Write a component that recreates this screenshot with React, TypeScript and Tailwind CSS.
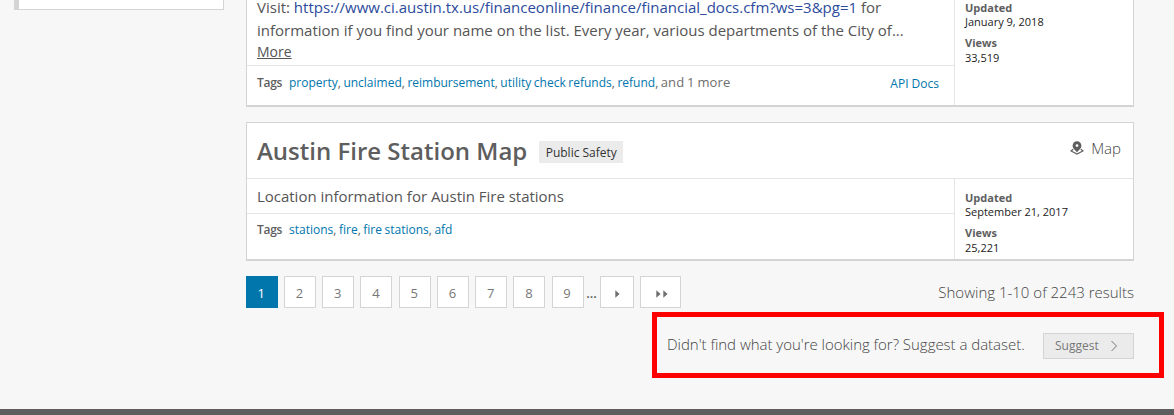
import React from "react";

const pages = ["2", "3", "4", "5", "6", "7", "8", "9"];

function Tags({ items, more }: { items: string[]; more?: string }) {
  return (
    <div className="flex whitespace-nowrap text-[12px] leading-[18px] text-[#5e5e5e]">
      <span className="w-[32px] shrink-0 font-semibold tracking-[-0.3px]">Tags</span>
      <span className="[word-spacing:-0.6px]">
        {items.map((tag, i) => (
          <React.Fragment key={tag}>
            <a className="text-[#0076ad]">{tag}</a>
            {i < items.length - 1 || more ? ", " : ""}
          </React.Fragment>
        ))}
        {more && <span className="text-[13px] leading-none tracking-[0.1px] text-[#6e6e6e]">{more}</span>}
      </span>
    </div>
  );
}

function Meta({ updated, views }: { updated: string; views: string }) {
  return (
    <dl className="text-[11px] leading-[14px] text-[#222]">
      <dt className="font-bold text-[#5e5e5e]">Updated</dt>
      <dd className="leading-[13px]">{updated}</dd>
      <dt className="mt-[8px] font-bold text-[#5e5e5e]">Views</dt>
      <dd className="leading-[16px]">{views}</dd>
    </dl>
  );
}

function MapIcon() {
  return (
    <svg width="14" height="14" viewBox="0 0 14 14" className="-mt-px">
      <path
        fill="#5e5e5e"
        fillRule="evenodd"
        d="M7 .3a4.400 4.400 0 0 0-4.400 4.400C2.600 7.500 5.400 8.900 7 11.400 8.600 8.900 11.400 7.500 11.400 4.700A4.400 4.400 0 0 0 7 .3Zm0 2.900a1.400 1.400 0 1 1 0 2.800 1.400 1.400 0 0 1 0-2.800Z"
      />
      <path fill="none" stroke="#5e5e5e" strokeWidth="1.200" d="M3.200 8.300 1.100 10 7 13 12.900 10 10.800 8.300" />
    </svg>
  );
}

function Arrow() {
  return (
    <svg width="5" height="8" viewBox="0 0 5 8" className="mt-[4px]">
      <path fill="#6e6e6e" d="M.3.300 4.600 4 .3 7.700Z" />
    </svg>
  );
}

export default function App() {
  return (
    <div className="flex h-[415px] w-[1174px] flex-col overflow-hidden bg-[#f7f7f7] font-['Open_Sans',sans-serif] text-[#5e5e5e]">
      <div className="flex h-[409px] shrink-0 items-start">
        <aside className="ml-[14px] h-[10px] w-[210px] shrink-0 border-r border-b border-l-[5px] border-[#d4d4d4] bg-white" />
        <main className="ml-[22px] w-[918px] shrink-0">
          <article className="flex h-[107px] w-[888px] border-x border-b-2 border-[#d4d4d4] bg-white">
            <div className="flex w-[708px] shrink-0 flex-col border-r border-[#e5e5e5]">
              <div className="h-[66px] shrink-0 border-b border-[#e5e5e5] pl-[10px] text-[15px] whitespace-nowrap">
                <p className="-mt-[4px] leading-[23px] text-[#555]">
                  Visit:{" "}
                  <a className="text-[#2c4b9c]">
                    https://www.ci.austin.tx.us/financeonline/finance/financial_docs.cfm?ws=3&amp;pg=1
                  </a>{" "}
                  for
                  <br />
                  information if you find your name on the list. Every year, various departments of the City of...
                </p>
                <a className="mt-px block text-[14px] leading-[18px] text-[#555] underline">More</a>
              </div>
              <div className="flex justify-between pt-[8px] pr-[15px] pl-[10px]">
                <Tags
                  items={["property", "unclaimed", "reimbursement", "utility check refunds", "refund"]}
                  more="and 1 more"
                />
                <a className="mt-[1px] text-[12px] leading-[18px] text-[#0076ad]">API Docs</a>
              </div>
            </div>
            <div className="pt-px pl-[10px]">
              <Meta updated="January 9, 2018" views="33,519" />
            </div>
          </article>

          <article className="mt-[15px] h-[139px] w-[888px] border border-b-2 border-[#d4d4d4] bg-white">
            <header className="flex h-[56px] items-center border-b border-[#e5e5e5] pr-[12px] pl-[10px]">
              <h2 className="text-[24px] leading-[32px] font-semibold whitespace-nowrap">Austin Fire Station Map</h2>
              <span className="mt-[3px] ml-[12px] flex h-[22px] w-[84px] items-center justify-center bg-[#ebebeb] pt-[2px] text-[12px] whitespace-nowrap text-[#333]">
                Public Safety
              </span>
              <span className="-mt-[4px] ml-auto flex items-center gap-[7px] text-[15px] font-light text-[#444]">
                <MapIcon />
                Map
              </span>
            </header>
            <div className="flex h-[80px]">
              <div className="w-[708px] shrink-0 border-r border-[#e5e5e5]">
                <p className="h-[35px] border-b border-[#e5e5e5] pl-[10px] text-[15px] leading-[35px] tracking-[-0.02px] text-[#555]">
                  Location information for Austin Fire stations
                </p>
                <div className="pt-[7px] pl-[10px]">
                  <Tags items={["stations", "fire", "fire stations", "afd"]} />
                </div>
              </div>
              <div className="pt-[12px] pl-[10px]">
                <Meta updated="September 21, 2017" views="25,221" />
              </div>
            </div>
          </article>

          <div className="mt-[15px] flex h-[32px] w-[888px] items-center">
            <nav className="-ml-[0.2px] flex items-center gap-[6.22px] text-[13px] text-[#777]">
              <span className="flex h-[32px] w-[32px] items-center justify-center bg-[#0076ad] pt-[3px] pr-[1px] text-white">
                1
              </span>
              {pages.map((n) => (
                <a
                  key={n}
                  className="flex h-[32px] w-[32px] items-center justify-center border border-[#d4d4d4] bg-white pt-[3px] pr-[1px]"
                >
                  {n}
                </a>
              ))}
            </nav>
            <span className="w-[16px] pt-[3px] text-center text-[13px] font-semibold">...</span>
            <a className="flex h-[32px] w-[34px] items-center justify-center border border-[#d4d4d4] bg-white pl-[2px]">
              <Arrow />
            </a>
            <a className="ml-[6px] flex h-[32px] w-[41px] items-center justify-center gap-[2px] border border-[#d4d4d4] bg-white pl-[3px]">
              <Arrow />
              <Arrow />
            </a>
            <span className="ml-auto text-[15px] font-light whitespace-nowrap text-[#444]">
              Showing 1-10 of 2243 results
            </span>
          </div>

          <section className="mt-[4px] ml-auto flex h-[66px] w-[512px] items-center border-5 border-[#f00] pl-[10px] whitespace-nowrap">
            <p className="-mt-[2px] w-[376px] text-[15px] font-light tracking-[-0.02px] text-[#444]">
              Didn't find what you're looking for? Suggest a dataset.
            </p>
            <button className="mt-[2px] flex h-[26px] w-[91px] items-center border border-[#d4d4d4] bg-[#ebebeb] pl-[11px] text-[12px] text-[#777]">
              Suggest
              <svg width="8" height="12" viewBox="0 0 8 12" className="ml-[11px]">
                <path fill="none" stroke="#777" d="M1.500 1 6.500 6 1.500 11" />
              </svg>
            </button>
          </section>
        </main>
      </div>
      <footer className="h-[6px] shrink-0 bg-[#5e5e5e]" />
    </div>
  );
}
